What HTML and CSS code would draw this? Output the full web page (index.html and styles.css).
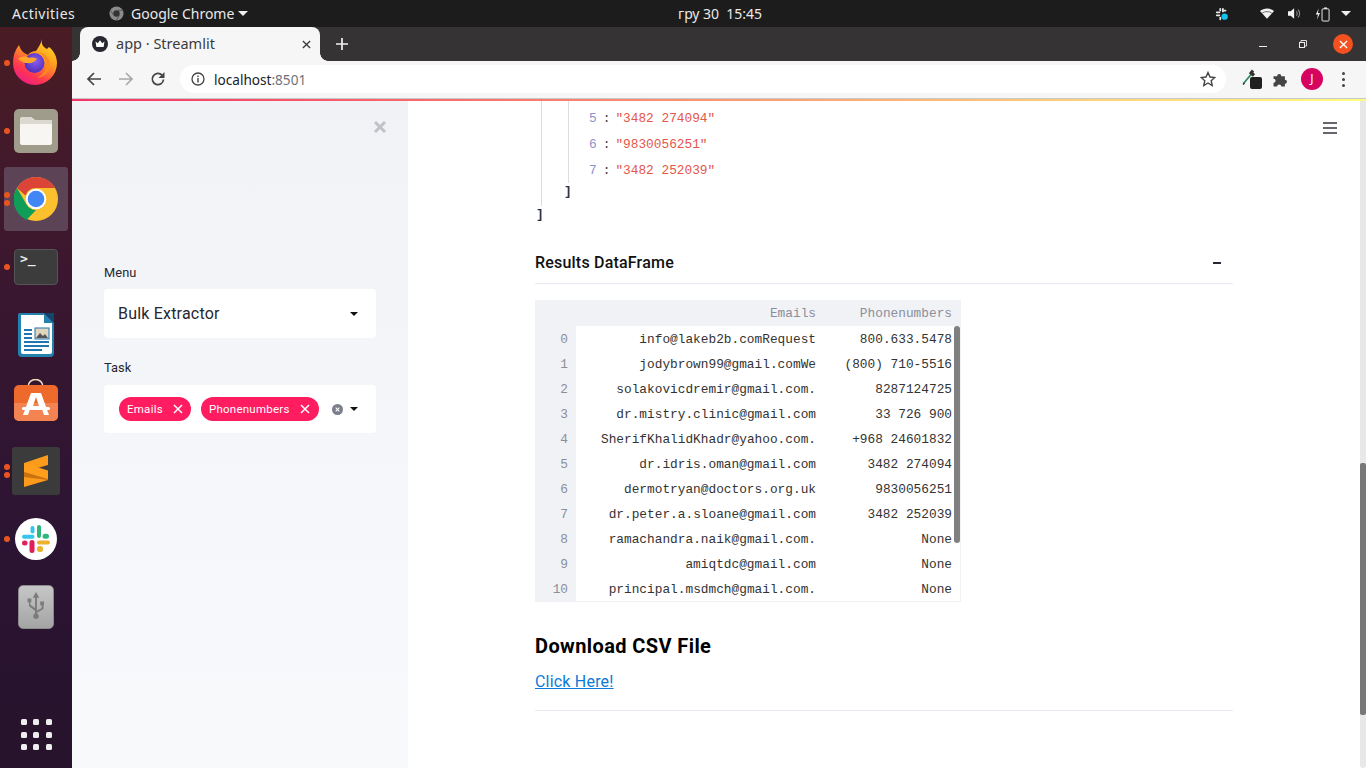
FILE: index.html
```html
<!DOCTYPE html>
<html lang="uk">
<head>
<meta charset="utf-8">
<title>app · Streamlit</title>
<link rel="stylesheet" href="styles.css">
</head>
<body>
<header class="topbar">
  <div class="topbar-left">
    <span class="activities">Activities</span>
    <span class="appmenu">
      <svg class="appmenu-icon" viewBox="0 0 16 16"><circle cx="8" cy="8" r="7.5" fill="#8b8b8b"/><circle cx="8" cy="8" r="3.4" fill="#333"/><path d="M8 4.6h6M5 10l-3-5M11 10l-3 5" stroke="#555" stroke-width="1"/></svg>
      Google Chrome
      <span class="caret-white"></span>
    </span>
  </div>
  <div class="clock">гру 30&nbsp;&nbsp;15:45</div>
  <div class="tray">
    <svg class="tray-slack" viewBox="0 0 16 16"><g fill="#e8e8e8"><rect x="1" y="5" width="5" height="2" rx="1"/><rect x="1" y="8.5" width="5" height="2" rx="1"/><rect x="5" y="1" width="2" height="4" rx="1"/><rect x="8" y="1" width="2" height="5" rx="1"/><rect x="5" y="11" width="2" height="4" rx="1"/><rect x="9" y="3" width="4" height="2" rx="1"/></g><circle cx="11" cy="11" r="3.6" fill="#14c1ee"/></svg>
    <svg class="tray-wifi" viewBox="0 0 16 12"><path d="M0 3.2C4.3-.7 11.700-.7 16 3.200L8 12z" fill="#f2f2f2"/><path d="M2.500 5.500C5.500 3.300 10.500 3.300 13.500 5.500" fill="none" stroke="#1c1c1c" stroke-width=".7"/></svg>
    <svg class="tray-vol" viewBox="0 0 16 14"><path d="M0 4.500h3L7 1v12L3 9.500H0z" fill="#f2f2f2"/><path d="M9.500 4.500a3.500 3.500 0 0 1 0 5M11.500 2.500a6.500 6.500 0 0 1 0 9" fill="none" stroke="#8f8f8f" stroke-width="1.200"/></svg>
    <svg class="tray-bat" viewBox="0 0 16 16"><path d="M4 2 .8 8.500h2.400L2 14l3.300-7H3z" fill="#f2f2f2"/><rect x="7.500" y="2.500" width="7.500" height="13" rx="1" fill="none" stroke="#f2f2f2"/><rect x="9.700" y="1" width="3" height="1.500" fill="#f2f2f2"/></svg>
    <span class="caret-white"></span>
  </div>
</header>

<div class="desktop">
  <nav class="dock">
    <div class="dock-item"><i class="dot dot-one"></i>
      <svg class="ic-firefox" viewBox="0 -2 46 48">
        <defs>
          <linearGradient id="ff" x1="0.85" y1="0" x2="0.25" y2="1"><stop offset="0" stop-color="#ffe226"/><stop offset=".4" stop-color="#ff9a1f"/><stop offset=".75" stop-color="#ff3750"/><stop offset="1" stop-color="#ee1a8c"/></linearGradient>
          <radialGradient id="ffp" cx=".55" cy=".4" r=".65"><stop offset="0" stop-color="#8a5cf0"/><stop offset="1" stop-color="#4a2bb5"/></radialGradient>
        </defs>
        <path d="M29 0c-1 5 1 8 5 10l2-2c5 4 8 10 8 16a22 22 0 0 1-44 0C0 17 2 11 6 6c1 3 2 5 4 7 1 1 3 2 5 3 2-3 5-4 8-4 2-3 5-7 6-12z" fill="url(#ff)"/>
        <circle cx="21.500" cy="24" r="10" fill="url(#ffp)"/>
        <path d="M5 20c4-3 8-3 11-1 3-1 7 0 8 1-2 2-5 5-9 4-5 0-7-2-10-4z" fill="#ffa62b"/>
        <path d="M25 13c6 1 11 5 12 12 0 8-6 13-13 14 7-4 11-9 9-16-1-4-4-8-8-10z" fill="#ff8a1f"/>
      </svg>
    </div>
    <div class="dock-item"><i class="dot dot-one"></i>
      <div class="ic-files"><svg viewBox="0 0 32 28"><path d="M0 3a3 3 0 0 1 3-3h8l4 3h14a3 3 0 0 1 3 3v19a3 3 0 0 1-3 3H3a3 3 0 0 1-3-3z" fill="#f5f4f1"/><path d="M0 7h32V3H14l-3-3H3a3 3 0 0 0-3 3z" fill="#dcd9d0"/><path d="M0 10a3 3 0 0 1 3-3h26a3 3 0 0 1 3 3v15a3 3 0 0 1-3 3H3a3 3 0 0 1-3-3z" fill="#f7f6f3"/></svg></div>
    </div>
    <div class="dock-item dock-item-active"><i class="dot dot-two"></i><i class="dot dot-three"></i>
      <svg class="ic-chrome" viewBox="0 0 44 44">
        <circle cx="22" cy="22" r="22" fill="#fbc02d"/>
        <path d="M22 0a22 22 0 0 1 19 11H22a11 11 0 0 0-10.500 7.500L3 11A22 22 0 0 1 22 0z" fill="#db4437"/>
        <path d="M3 11l9.500 16.500A11 11 0 0 0 22 33l-9.500 9.900A22 22 0 0 1 3 11z" fill="#0f9d58"/>
        <circle cx="22" cy="22" r="10.300" fill="#fff"/><circle cx="22" cy="22" r="8.300" fill="#4285f4"/>
      </svg>
    </div>
    <div class="dock-item"><i class="dot dot-one"></i>
      <div class="ic-terminal"><span class="prompt">&gt;_</span></div>
    </div>
    <div class="dock-item">
      <svg class="ic-writer" viewBox="0 0 36 44">
        <path d="M2 0h24l10 10v30a4 4 0 0 1-4 4H4a4 4 0 0 1-4-4V2a2 2 0 0 1 2-2z" fill="#2480ad"/>
        <path d="M3 2h23v8h8v29a2 2 0 0 1-2 2H5a2 2 0 0 1-2-2z" fill="#fff"/>
        <path d="M27 0l9 10V0z" fill="#10476e"/>
        <g fill="#1f76b0"><rect x="6" y="16" width="8" height="2"/><rect x="6" y="20" width="8" height="2"/><rect x="6" y="24" width="8" height="2"/><rect x="6" y="28" width="25" height="2"/><rect x="6" y="32" width="25" height="2"/><rect x="6" y="36" width="18" height="2"/></g>
        <rect x="17" y="15" width="14" height="11" fill="#e0d6c0" stroke="#1f76b0"/>
        <path d="M18 25l4-5 3 3 2-2 3 4z" fill="#555"/>
      </svg>
    </div>
    <div class="dock-item">
      <svg class="ic-store" viewBox="0 0 44 44">
        <path d="M14 8c0-10 15-10 15 0" fill="none" stroke="#f2dfbd" stroke-width="1.500"/>
        <rect y="6" width="44" height="36" rx="5" fill="#ee6a2c"/>
        <path d="M0 24h44v13a5 5 0 0 1-5 5H5a5 5 0 0 1-5-5z" fill="#f38350"/>
        <path d="M17 14h10l8 22h-5l-2-6H16l-2 6H9zM22 18l-3 9h6z" fill="#fff"/>
        <rect x="8" y="28" width="28" height="3" rx="1.500" fill="#fff"/>
      </svg>
    </div>
    <div class="dock-item"><i class="dot dot-two"></i><i class="dot dot-three"></i>
      <div class="ic-sublime"><svg viewBox="0 0 24 32"><path d="M24 0v10L0 17V8z" fill="#fb9a1b"/><path d="M0 22v10l24-7v-9z" fill="#fb9a1b"/><path d="M0 12.500v9.500l24 3V16z" fill="#c9720f"/><path d="M0 8v9l24 7v-8.500z" fill="#ff9e1c"/></svg></div>
    </div>
    <div class="dock-item"><i class="dot dot-one"></i>
      <div class="ic-slack"><svg viewBox="0 0 28 28">
        <g fill="#36c5f0"><rect x="0" y="9.800" width="12.500" height="4" rx="2"/><rect x="8.500" y="1" width="4" height="7.500" rx="2"/></g>
        <g fill="#2eb67d"><rect x="15" y="0" width="4" height="13" rx="2"/><rect x="20.500" y="8.800" width="6.500" height="5" rx="2.500"/></g>
        <g fill="#e01e5a"><rect x="0" y="15.500" width="5.500" height="5" rx="2.500"/><rect x="7.500" y="15" width="5" height="13" rx="2.500"/></g>
        <g fill="#ecb22e"><rect x="15" y="15.500" width="13" height="4" rx="2"/><rect x="15" y="21" width="6" height="6" rx="2.500"/></g>
      </svg></div>
    </div>
    <div class="dock-item">
      <div class="ic-usb"><svg viewBox="0 0 20 32"><path d="M10 0l3.500 6H11v17a3 3 0 1 1-2 0v-3L3.500 16a3 3 0 0 1-1-2v-3H1V7h4v4H4v2.500L9 17V6H6.500z M11 20l5-3v-3h-1.500v-4h4v4H18v4l-7 4z" fill="#7b7b7b"/></svg></div>
    </div>
    <div class="dock-apps">
      <i></i><i></i><i></i><i></i><i></i><i></i><i></i><i></i><i></i>
    </div>
  </nav>

  <div class="browser">
    <div class="tabstrip">
      <div class="tab">
        <svg class="tab-logo" viewBox="0 0 16 16"><circle cx="8" cy="8" r="8" fill="#262730"/><path d="M3.500 5.500l2.300 1.800L8 4.300l2.200 3 2.300-1.800-.9 5.500H4.400z" fill="#fff"/></svg>
        <span class="tab-title">app · Streamlit</span>
        <svg class="tab-close" viewBox="0 0 10 10"><path d="M1 1l8 8M9 1L1 9" stroke="#3c3c3c" stroke-width="1.500"/></svg>
      </div>
      <svg class="tab-new" viewBox="0 0 12 12"><path d="M6 0v12M0 6h12" stroke="#f1f1f1" stroke-width="1.700"/></svg>
      <div class="winctl">
        <span class="win-min"></span>
        <svg class="win-max" viewBox="0 0 8 8"><path d="M2 2V.5h5.500V6H6" fill="none" stroke="#ddd"/><rect x=".5" y="2.500" width="5" height="5" fill="none" stroke="#eee"/></svg>
        <span class="win-close"><svg viewBox="0 0 10 10"><path d="M1 1l8 8M9 1L1 9" stroke="#fff" stroke-width="1.500"/></svg></span>
      </div>
    </div>
    <div class="toolbar">
      <svg class="nav-ic" viewBox="0 0 16 16"><path d="M15 8H2M8 2L2 8l6 6" fill="none" stroke="#444" stroke-width="1.700"/></svg>
      <svg class="nav-ic nav-ic-fwd" viewBox="0 0 16 16"><path d="M1 8h13M8 2l6 6-6 6" fill="none" stroke="#a8a8a8" stroke-width="1.700"/></svg>
      <svg class="nav-ic nav-ic-reload" viewBox="0 0 16 16"><path d="M13.500 8.500A5.600 5.600 0 1 1 12 4.200" fill="none" stroke="#444" stroke-width="1.700"/><path d="M14.500 1v6h-6z" fill="#444"/></svg>
      <div class="omnibox">
        <svg class="omni-info" viewBox="0 0 14 14"><circle cx="7" cy="7" r="6" fill="none" stroke="#444" stroke-width="1.300"/><path d="M7 6v4.500M7 3.500v1.400" stroke="#444" stroke-width="1.400"/></svg>
        <span class="omni-host">localhost</span><span class="omni-port">:8501</span>
        <svg class="omni-star" viewBox="0 0 16 16"><path d="M8 1.500l2 4.500 4.800.5-3.600 3.200 1 4.800L8 12l-4.200 2.500 1-4.800L1.200 6.500 6 6z" fill="none" stroke="#444" stroke-width="1.400"/></svg>
      </div>
      <div class="ext">
        <svg class="ext-dropper" viewBox="0 0 14 16"><path d="M1.500 14.500L9 5.500" stroke="#2d8c5e" stroke-width="1.800"/><path d="M1 15.500l1.500-1.500" stroke="#333" stroke-width="1.500"/><path d="M8 3l4 3.500" stroke="#333" stroke-width="3.500"/><path d="M11 1.500l-1.500 2" stroke="#333" stroke-width="3"/></svg>
        <span class="ext-badge"></span>
      </div>
      <svg class="ext-puzzle" viewBox="0.500 1 14.500 14.500"><path d="M1 5h3.500a2 2 0 1 1 4 0H12v3.500a2 2 0 1 1 0 4V15H8.500a2 2 0 1 0-4 0H1v-3.500a2 2 0 1 0 0-4z" fill="#444"/></svg>
      <span class="avatar">J</span>
      <span class="kebab"><i></i><i></i><i></i></span>
    </div>
    <div class="decoration"></div>
    <div class="viewport">
      <aside class="sidebar">
        <svg class="side-close" viewBox="0 0 14 14"><path d="M2 2l10 10M12 2L2 12" stroke="#c0c2c9" stroke-width="3"/></svg>
        <div class="side-form">
          <label class="field-label">Menu</label>
          <div class="select">
            <span class="select-value">Bulk Extractor</span>
            <span class="caret-black"></span>
          </div>
          <label class="field-label field-label-task">Task</label>
          <div class="multi">
            <span class="tag">Emails<svg viewBox="0 0 10 10"><path d="M1 1l8 8M9 1L1 9" stroke="#fff" stroke-width="1.500"/></svg></span>
            <span class="tag">Phonenumbers<svg viewBox="0 0 10 10"><path d="M1 1l8 8M9 1L1 9" stroke="#fff" stroke-width="1.500"/></svg></span>
            <span class="multi-clear"><svg viewBox="0 0 10 10"><path d="M3 3l4 4M7 3L3 7" stroke="#fff" stroke-width="1.200"/></svg></span>
            <span class="caret-black"></span>
          </div>
        </div>
      </aside>
      <main class="main">
        <svg class="hamburger" viewBox="0 0 14 12"><path d="M0 1h14M0 6h14M0 11h14" stroke="#33353f" stroke-width="1.500"/></svg>
        <div class="content">
          <div class="json">
            <div class="json-outer">
              <div class="json-inner">
                <div class="json-row"><span class="json-key">5</span><span class="json-colon">:</span><span class="json-str">"3482 274094"</span></div>
                <div class="json-row"><span class="json-key">6</span><span class="json-colon">:</span><span class="json-str">"9830056251"</span></div>
                <div class="json-row"><span class="json-key">7</span><span class="json-colon">:</span><span class="json-str">"3482 252039"</span></div>
              </div>
              <div class="json-close-inner">]</div>
            </div>
            <div class="json-close-outer">]</div>
          </div>
          <div class="expander">
            <span class="expander-title">Results DataFrame</span>
            <span class="expander-minus"></span>
          </div>
          <div class="frame">
            <div class="frame-scroll"></div>
            <div class="frame-row frame-head"><span class="c-idx"></span><span class="c-mail">Emails</span><span class="c-phone">Phonenumbers</span></div>
            <div class="frame-row"><span class="c-idx">0</span><span class="c-mail">info@lakeb2b.comRequest</span><span class="c-phone">800.633.5478</span></div>
            <div class="frame-row"><span class="c-idx">1</span><span class="c-mail">jodybrown99@gmail.comWe</span><span class="c-phone">(800) 710-5516</span></div>
            <div class="frame-row"><span class="c-idx">2</span><span class="c-mail">solakovicdremir@gmail.com.</span><span class="c-phone">8287124725</span></div>
            <div class="frame-row"><span class="c-idx">3</span><span class="c-mail">dr.mistry.clinic@gmail.com</span><span class="c-phone">33 726 900</span></div>
            <div class="frame-row"><span class="c-idx">4</span><span class="c-mail">SherifKhalidKhadr@yahoo.com.</span><span class="c-phone">+968 24601832</span></div>
            <div class="frame-row"><span class="c-idx">5</span><span class="c-mail">dr.idris.oman@gmail.com</span><span class="c-phone">3482 274094</span></div>
            <div class="frame-row"><span class="c-idx">6</span><span class="c-mail">dermotryan@doctors.org.uk</span><span class="c-phone">9830056251</span></div>
            <div class="frame-row"><span class="c-idx">7</span><span class="c-mail">dr.peter.a.sloane@gmail.com</span><span class="c-phone">3482 252039</span></div>
            <div class="frame-row"><span class="c-idx">8</span><span class="c-mail">ramachandra.naik@gmail.com.</span><span class="c-phone">None</span></div>
            <div class="frame-row"><span class="c-idx">9</span><span class="c-mail">amiqtdc@gmail.com</span><span class="c-phone">None</span></div>
            <div class="frame-row"><span class="c-idx">10</span><span class="c-mail">principal.msdmch@gmail.com.</span><span class="c-phone">None</span></div>
          </div>
          <h3 class="csv-title">Download CSV File</h3>
          <a class="csv-link" href="#">Click Here!</a>
          <hr class="rule">
        </div>
      </main>
      <div class="page-scroll"><div class="page-thumb"></div></div>
    </div>
  </div>
</div>
</body>
</html>
```
FILE: styles.css
```css
* { box-sizing: border-box; }
html, body { margin: 0; height: 100%; overflow: hidden; }
body { width: 1366px; height: 768px; display: flex; flex-direction: column; font-family: "Roboto", "Noto Sans", sans-serif; background: #fff; }
svg { display: block; flex: none; }

/* top bar */
.topbar { height: 27px; flex: none; background: #1c1c1c; color: #e9e9e9; font: 14px/27px "Noto Sans", sans-serif; display: grid; grid-template-columns: 666px auto 1fr; padding: 0 12px; }
.topbar-left { display: flex; align-items: center; }
.activities { width: 97px; letter-spacing: .5px; }
.appmenu { display: flex; align-items: center; }
.appmenu-icon { width: 15px; height: 15px; margin-right: 7px; }
.caret-white { display: inline-block; width: 0; height: 0; border: 5px solid transparent; border-top: 5px solid #eee; border-bottom: 0; margin-left: 4px; }
.clock { font-size: 14px; }
.tray { display: flex; align-items: center; justify-content: flex-end; padding-right: 3px; }
.tray-slack { width: 14px; height: 14px; margin-right: 31px; }
.tray-wifi { width: 14px; height: 11px; margin-right: 14px; }
.tray-vol { width: 14px; height: 13px; margin-right: 13px; }
.tray-bat { width: 15px; height: 16px; }
.tray .caret-white { margin-left: 11px; }

.desktop { flex: 1; display: flex; min-height: 0; }

/* dock */
.dock { width: 72px; flex: none; background: linear-gradient(180deg, #4a1c24 0%, #3a1730 35%, #2b1433 70%, #27132b 100%); display: flex; flex-direction: column; align-items: center; padding-top: 2px; }
.dock-item { position: relative; width: 64px; height: 68px; flex: none; display: flex; align-items: center; justify-content: center; border-radius: 3px; }
.dock-item-active { background: #5c4356; height: 64px; margin: 2px 0; }
.dot { position: absolute; left: 0; width: 6px; height: 6px; border-radius: 50%; background: #e95420; }
.dot-one { top: 31px; }
.dot-two { top: 27px; }
.dot-three { top: 35px; }
.dock-item-active .dot-two { top: 25px; }
.dock-item-active .dot-three { top: 33px; }
.ic-firefox { width: 46px; height: 48px; margin-bottom: 4px; }
.ic-files { width: 44px; height: 44px; border-radius: 5px; background: #a09c8c; display: flex; align-items: center; justify-content: center; }
.ic-files svg { width: 32px; height: 28px; }
.ic-chrome { width: 44px; height: 44px; }
.ic-terminal { width: 44px; height: 36px; border-radius: 4px; background: #3c3c3c; border: 1px solid #555; position: relative; }
.prompt { position: absolute; left: 5px; top: 1px; color: #eee; font: bold 13px/15px "DejaVu Sans Mono", monospace; }
.ic-writer { width: 36px; height: 44px; }
.ic-store { width: 44px; height: 44px; margin-bottom: 4px; }
.ic-sublime { width: 48px; height: 48px; background: #3b3b3b; border-radius: 3px; display: flex; align-items: center; justify-content: center; }
.ic-sublime svg { width: 24px; height: 32px; }
.ic-slack { width: 42px; height: 42px; border-radius: 50%; background: #fff; display: flex; align-items: center; justify-content: center; }
.ic-slack svg { width: 28px; height: 28px; }
.ic-usb { width: 36px; height: 44px; border-radius: 5px; background: linear-gradient(#c6c6c6, #a4a4a4); display: flex; align-items: center; justify-content: center; border: 1px solid #8a8a8a; }
.ic-usb svg { width: 20px; height: 30px; }
.dock-apps { margin-top: auto; margin-bottom: 18px; width: 31px; height: 31px; display: grid; grid-template-columns: repeat(3, 6px); grid-template-rows: repeat(3, 6px); justify-content: space-between; align-content: space-between; }
.dock-apps i { background: #eee; border-radius: 1.500px; }

/* browser */
.browser { flex: 1; min-width: 0; display: flex; flex-direction: column; }
.tabstrip { height: 34px; flex: none; background: #353334; display: flex; align-items: flex-end; padding-left: 8px; }
.tab { position: relative; width: 240px; height: 34px; background: #f6f6f6; border-radius: 8px 8px 0 0; display: flex; align-items: center; padding: 0 9px 0 12px; color: #3c3c3c; font: 14.5px "Noto Sans", sans-serif; }
.tab::before, .tab::after { content: ""; position: absolute; bottom: 0; width: 8px; height: 8px; }
.tab::before { left: -8px; background: radial-gradient(circle at 0 0, transparent 7.500px, #f6f6f6 8px); }
.tab::after { right: -8px; background: radial-gradient(circle at 100% 0, transparent 7.500px, #f6f6f6 8px); }
.tab-logo { width: 16px; height: 16px; margin-right: 8px; }
.tab-title { flex: 1; padding-bottom: 2px; }
.tab-close { width: 9px; height: 9px; }
.tab-new { width: 12px; height: 12px; margin: 0 0 11px 16px; }
.winctl { margin-left: auto; display: flex; align-items: center; height: 100%; padding-right: 13px; }
.win-min { width: 8px; height: 1px; background: #eee; margin: 4px 32px 0 0; }
.win-max { width: 8px; height: 8px; margin-right: 26px; }
.win-close { width: 20px; height: 20px; border-radius: 50%; background: #f4511e; display: flex; align-items: center; justify-content: center; }
.win-close svg { width: 9px; height: 9px; }

.toolbar { height: 38px; flex: none; background: #f6f6f6; border-bottom: 1px solid #c8c8c8; display: flex; align-items: center; padding: 0 0 1px 14px; }
.nav-ic { width: 16px; height: 16px; margin-right: 16px; }
.nav-ic-reload { margin-right: 14px; }
.omnibox { width: 1046px; height: 28px; background: #fff; border-radius: 14px; display: flex; align-items: center; padding: 0 10px 0 11px; font: 13.6px "Noto Sans", sans-serif; color: #202124; }
.omni-info { width: 14px; height: 14px; margin-right: 9px; }
.omni-port { color: #6f7379; }
.omni-star { width: 16px; height: 16px; margin-left: auto; }
.ext { position: relative; width: 20px; height: 20px; margin-left: 16px; }
.ext-dropper { width: 14px; height: 16px; }
.ext-badge { position: absolute; left: 8px; top: 8px; width: 12px; height: 12px; border-radius: 2px; background: #202020; }
.ext-puzzle { width: 15px; height: 15px; margin-left: 11px; }
.avatar { width: 22px; height: 22px; border-radius: 50%; background: #d6045f; color: #fff; font: 12px/22px "Noto Sans", sans-serif; text-align: center; margin-left: 13px; }
.kebab { display: flex; flex-direction: column; gap: 3px; margin-left: 19px; }
.kebab i { width: 3px; height: 3px; border-radius: 50%; background: #444; }

.decoration { height: 2px; flex: none; background: linear-gradient(90deg, #f63366, #fffd80); }
.viewport { flex: 1; min-height: 0; display: flex; }

/* sidebar */
.sidebar { width: 336px; flex: none; background: linear-gradient(180deg, #f0f2f6 0%, #f6f7fa 60%, #f8f9fb 100%); position: relative; padding: 164px 32px 0; color: #262730; }
.side-close { position: absolute; left: 301px; top: 19px; width: 14px; height: 14px; }
.field-label { display: block; font-size: 12.8px; letter-spacing: .1px; line-height: 16px; margin-bottom: 8px; }
.field-label-task { margin-top: 22px; margin-bottom: 9px; }
.select { height: 49px; background: #fff; border-radius: 4px; display: flex; align-items: center; justify-content: space-between; padding: 0 18px 0 14px; font-size: 16px; letter-spacing: .2px; }
.caret-black { display: inline-block; width: 0; height: 0; border: 4px solid transparent; border-top: 4px solid #111; border-bottom: 0; }
.multi { height: 48px; background: #fff; border-radius: 4px; display: flex; align-items: center; padding: 0 18px 0 15px; position: relative; }
.tag { height: 24px; background: #ff1c60; border-radius: 12px; color: #fff; font-size: 11.5px; letter-spacing: .25px; display: flex; align-items: center; padding: 0 9px 0 8px; margin-right: 9px; }
.tag:first-child { padding-right: 8px; margin-right: 10px; }
.tag svg { width: 10px; height: 10px; margin-left: 10px; }
.multi-clear { width: 11px; height: 11px; border-radius: 50%; background: #7b7e8c; margin-left: 4px; display: flex; align-items: center; justify-content: center; }
.multi-clear svg { width: 9px; height: 9px; }
.multi .caret-black { margin-left: auto; }

/* main */
.main { flex: 1; min-width: 0; position: relative; overflow: hidden; background: #fff; }
.hamburger { position: absolute; left: 915px; top: 21px; width: 14px; height: 12px; }
.content { width: 698px; margin-left: 127px; color: #262730; }
.json { font: 12.8px "Liberation Mono", monospace; height: 128px; padding-left: 6px; }
.json-outer { border-left: 1px solid #ddd; height: 105px; padding-left: 26px; }
.json-inner { border-left: 1px solid #ddd; height: 82px; padding: 5px 0 0 20px; }
.json-row { height: 26px; line-height: 26px; display: flex; color: #383a42; }
.json-key { width: 7.7px; color: #8d8fcc; }
.json-colon { margin: 0 5px 0 6px; color: #444; }
.json-str { color: #e45649; }
.json-close-inner { font-weight: bold; line-height: 16px; margin: 1px 0 0 -4px; color: #26343f; }
.json-close-outer { font-weight: bold; line-height: 16px; margin: 1px 0 0 -5px; color: #26343f; }
.expander { height: 55px; border-bottom: 1px solid #e6eaf1; display: flex; align-items: center; justify-content: space-between; padding: 13px 12px 0 0; }
.expander-title { font-size: 16px; font-weight: 500; letter-spacing: .2px; color: #111; }
.expander-minus { width: 8px; height: 2px; background: #262730; }
.frame { width: 426px; height: 302px; margin-top: 16px; position: relative; border: 1px solid #f0f2f6; border-top: 0; border-left: 0; overflow: hidden; font: 12.8px "Liberation Mono", monospace; }
.frame-scroll { position: absolute; right: 0; top: 26px; width: 6px; height: 217px; border-radius: 3px; background: #808080; }
.frame-row { height: 25px; line-height: 25px; display: flex; color: #333; }
.frame-row span { padding-top: 1px; }
.frame-head { height: 26px; background: #f0f2f6; color: #8b8e99; }
.c-idx { width: 41px; flex: none; background: #f0f2f6; color: #8b8e99; text-align: right; padding-right: 8px; }
.c-mail { width: 240px; flex: none; text-align: right; }
.c-phone { width: 136px; flex: none; text-align: right; }
.csv-title { margin: 30px 0 0; font-size: 20px; line-height: 28px; font-weight: 700; letter-spacing: .4px; color: #000; }
.csv-link { display: inline-block; margin-top: 10px; font-size: 16px; line-height: 24px; letter-spacing: .2px; color: #0b7ad8; }
.rule { margin: 16px 0 0; border: 0; border-top: 1px solid #e6eaf1; }

.page-scroll { width: 6px; flex: none; background: #e8e8e8; padding-top: 362px; border-radius: 0 0 3px 3px; }
.page-thumb { height: 252px; background: #787878; border-radius: 2px; }
```
